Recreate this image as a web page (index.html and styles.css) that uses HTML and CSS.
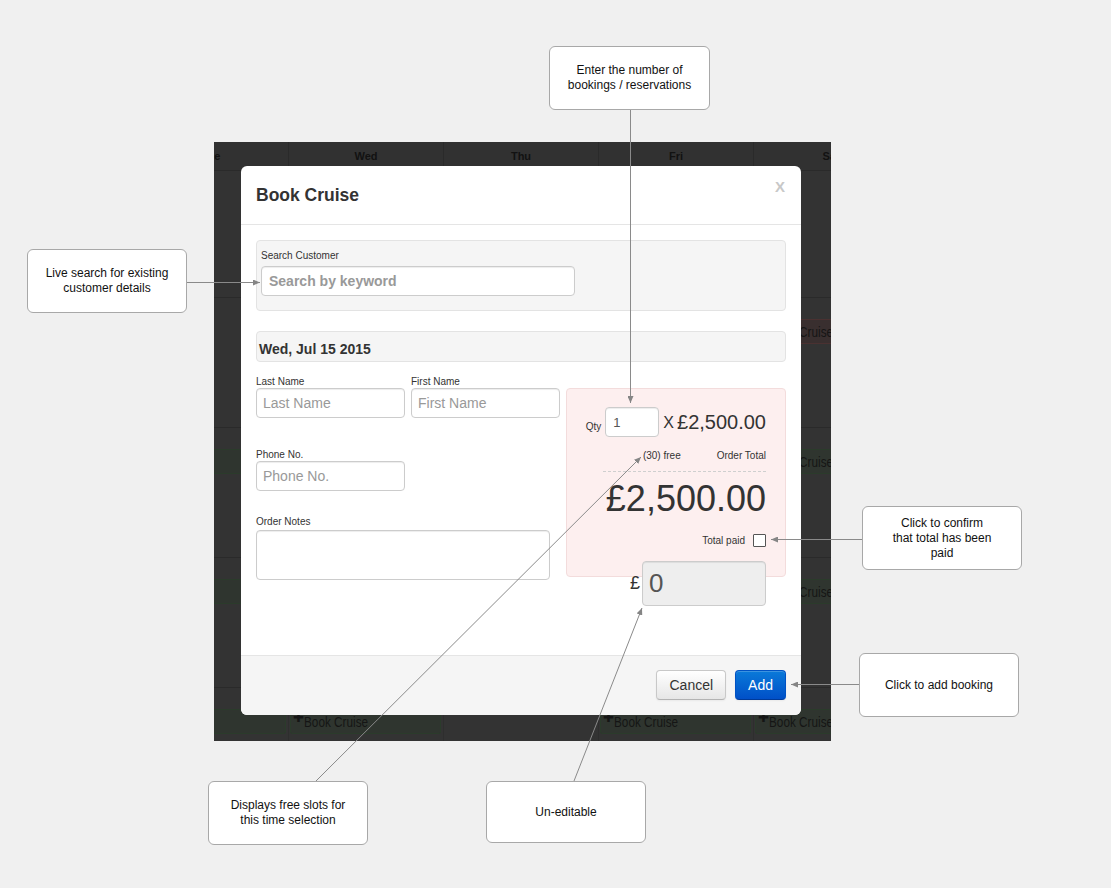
FILE: index.html
```html
<!DOCTYPE html>
<html lang="en">
<head>
<meta charset="utf-8">
<title>Book Cruise – booking dialog</title>
<link rel="stylesheet" href="styles.css">
</head>
<body>
<div class="stage">

  <!-- week calendar behind the dialog backdrop -->
  <div class="calendar">
    <div class="cal-grid">
      <div class="cal-head">Tue</div>
      <div class="cal-head">Wed</div>
      <div class="cal-head">Thu</div>
      <div class="cal-head">Fri</div>
      <div class="cal-head">Sat</div>

      <div class="cal-cell"></div>
      <div class="cal-cell"><div class="slot"><span class="plus">✚</span><span class="txt">Book Cruise</span></div></div>
      <div class="cal-cell"></div>
      <div class="cal-cell"><div class="slot"><span class="plus">✚</span><span class="txt">Book Cruise</span></div></div>
      <div class="cal-cell"></div>

      <div class="cal-cell"></div>
      <div class="cal-cell"><div class="slot"><span class="plus">✚</span><span class="txt">Book Cruise</span></div></div>
      <div class="cal-cell"></div>
      <div class="cal-cell"></div>
      <div class="cal-cell"><div class="slot full"><span class="plus">✚</span><span class="txt">Book Cruise</span></div></div>

      <div class="cal-cell"><div class="slot"><span class="plus">✚</span><span class="txt">Book Cruise</span></div></div>
      <div class="cal-cell"></div>
      <div class="cal-cell"></div>
      <div class="cal-cell"><div class="slot"><span class="plus">✚</span><span class="txt">Book Cruise</span></div></div>
      <div class="cal-cell"><div class="slot"><span class="plus">✚</span><span class="txt">Book Cruise</span></div></div>

      <div class="cal-cell"><div class="slot"><span class="plus">✚</span><span class="txt">Book Cruise</span></div></div>
      <div class="cal-cell"><div class="slot"><span class="plus">✚</span><span class="txt">Book Cruise</span></div></div>
      <div class="cal-cell"></div>
      <div class="cal-cell"></div>
      <div class="cal-cell"><div class="slot"><span class="plus">✚</span><span class="txt">Book Cruise</span></div></div>

      <div class="cal-cell"><div class="slot"><span class="plus">✚</span><span class="txt">Book Cruise</span></div></div>
      <div class="cal-cell"><div class="slot"><span class="plus">✚</span><span class="txt">Book Cruise</span></div></div>
      <div class="cal-cell"></div>
      <div class="cal-cell"><div class="slot"><span class="plus">✚</span><span class="txt">Book Cruise</span></div></div>
      <div class="cal-cell"><div class="slot"><span class="plus">✚</span><span class="txt">Book Cruise</span></div></div>
    </div>
  </div>

  <!-- booking dialog -->
  <div class="modal">
    <div class="modal-header">
      <h3>Book Cruise</h3>
      <span class="close">X</span>
    </div>

    <div class="modal-body">
      <div class="well search">
        <label class="lbl">Search Customer</label>
        <input class="input search-input" type="text" placeholder="Search by keyword">
      </div>

      <div class="well date">Wed, Jul 15 2015</div>

      <div class="form-grid">
        <div class="details">
          <div class="field-row">
            <div class="field">
              <label class="lbl">Last Name</label>
              <input class="input" type="text" placeholder="Last Name">
            </div>
            <div class="field">
              <label class="lbl">First Name</label>
              <input class="input" type="text" placeholder="First Name">
            </div>
          </div>
          <div class="field-row phone-row">
            <div class="field">
              <label class="lbl">Phone No.</label>
              <input class="input" type="text" placeholder="Phone No.">
            </div>
          </div>
          <div class="field-row notes-row">
            <div class="field notes">
              <label class="lbl">Order Notes</label>
              <textarea class="input notes-input"></textarea>
            </div>
          </div>
        </div>

        <div class="order">
          <div class="qty-row">
            <span class="qty-label">Qty</span>
            <input class="input qty-input" type="text" value="1">
            <span class="times">X</span>
            <span class="unit-price">£2,500.00</span>
          </div>
          <div class="meta-row">
            <span>(30) free</span>
            <span>Order Total</span>
          </div>
          <div class="rule"></div>
          <div class="total">£2,500.00</div>
          <div class="paid-row">
            <span>Total paid</span>
            <input class="paid-check" type="checkbox">
          </div>
          <div class="cash-row">
            <span class="currency">£</span>
            <input class="input cash-input" type="text" value="0" disabled>
          </div>
        </div>
      </div>
    </div>

    <div class="modal-footer">
      <button class="btn">Cancel</button>
      <button class="btn btn-primary">Add</button>
    </div>
  </div>

  <!-- annotation notes -->
  <div class="note note-qty">Enter the number of<br>bookings / reservations</div>
  <div class="note note-search">Live search for existing<br>customer details</div>
  <div class="note note-paid">Click to confirm<br>that total has been<br>paid</div>
  <div class="note note-add">Click to add booking</div>
  <div class="note note-free">Displays free slots for<br>this time selection</div>
  <div class="note note-cash">Un-editable</div>

  <!-- leader lines from notes to the controls -->
  <svg class="leaders" width="1111" height="888" viewBox="0 0 1111 888">
    <defs>
      <marker id="tip" markerWidth="7" markerHeight="6" refX="7" refY="3" orient="auto" markerUnits="userSpaceOnUse">
        <path d="M0,0 L7,3 L0,6 z" fill="#858585"/>
      </marker>
    </defs>
    <g stroke="#8a8a8a" stroke-width="1" fill="none">
      <line x1="630.5" y1="110" x2="630.5" y2="403" marker-end="url(#tip)"/>
      <line x1="187" y1="282.5" x2="260" y2="282.5" marker-end="url(#tip)"/>
      <line x1="862" y1="539.5" x2="771" y2="539.5" marker-end="url(#tip)"/>
      <line x1="859" y1="684.5" x2="791" y2="684.5" marker-end="url(#tip)"/>
      <line x1="316" y1="781" x2="641" y2="457" marker-end="url(#tip)"/>
      <line x1="574" y1="781" x2="642" y2="608" marker-end="url(#tip)"/>
    </g>
  </svg>
</div>
</body>
</html>
```

FILE: styles.css
```css
* {
  box-sizing: border-box;
}

html,
body {
  margin: 0;
}

body {
  background: #f0f0f0;
  font-family: "Liberation Sans", Arial, sans-serif;
  color: #333;
}

.stage {
  position: relative;
  width: 1111px;
  height: 888px;
  overflow: hidden;
}

/* ---------- calendar under the backdrop ---------- */
.calendar {
  position: absolute;
  left: 214px;
  top: 142px;
  width: 617px;
  height: 599px;
  overflow: hidden;
  background: #333;
}

.cal-grid {
  display: grid;
  grid-template-columns: repeat(5, 155px);
  grid-template-rows: 28px 127px repeat(4, 130px);
  width: 775px;
  margin-left: -81px;
}

.cal-head {
  display: flex;
  align-items: center;
  justify-content: center;
  border-left: 1px solid #2a2a2a;
  background: #313131;
  font-size: 11px;
  font-weight: bold;
  color: #121212;
}

.cal-cell {
  border-left: 1px solid #2e2e2e;
  border-top: 1px solid #2a2a2a;
  padding-top: 21px;
  min-width: 0;
}

.slot {
  display: flex;
  align-items: center;
  height: 25px;
  margin: 0 2px 0 1px;
  padding-left: 2px;
  background: #2f352f;
  border: 1px solid #2b3b2b;
  border-radius: 2px;
  color: #151515;
  white-space: nowrap;
  overflow: hidden;
}

.slot.full {
  background: #392f2f;
  border-color: #4a3131;
}

.slot .plus {
  align-self: flex-start;
  margin-top: 1px;
  font-family: "DejaVu Sans", sans-serif;
  font-size: 13px;
  line-height: 13px;
}

.slot .txt {
  display: inline-block;
  font-size: 14px;
  transform: scaleX(0.84);
  transform-origin: left center;
}

/* ---------- dialog ---------- */
.modal {
  position: absolute;
  left: 241px;
  top: 166px;
  width: 560px;
  height: 549px;
  display: flex;
  flex-direction: column;
  background: #fff;
  border-radius: 6px;
  overflow: hidden;
}

.modal-header {
  display: flex;
  justify-content: space-between;
  align-items: center;
  height: 59px;
  padding: 0 16px 0 15px;
  border-bottom: 1px solid #e5e5e5;
}

.modal-header h3 {
  margin: 0;
  font-size: 17.5px;
  font-weight: bold;
  color: #333;
}

.close {
  align-self: flex-start;
  margin-top: 12px;
  font-size: 15px;
  font-weight: bold;
  line-height: 17px;
  color: #c8c8c8;
}

.modal-body {
  flex: 1;
  padding: 15px;
}

.well {
  background: #f5f5f5;
  border: 1px solid #e3e3e3;
  border-radius: 4px;
}

.lbl {
  display: block;
  font-size: 10px;
  line-height: 13px;
  color: #333;
}

.input {
  display: block;
  width: 100%;
  height: 30px;
  margin: 0;
  padding: 0 6px;
  border: 1px solid #ccc;
  border-radius: 4px;
  background: #fff;
  box-shadow: inset 0 1px 1px rgba(0, 0, 0, 0.075);
  font-family: "Liberation Sans", Arial, sans-serif;
  font-size: 14px;
  color: #555;
  outline: none;
}

.input::placeholder {
  color: #999;
}

.search {
  height: 71px;
  padding: 8px 4px 0;
}

.search .lbl {
  margin-bottom: 4px;
}

.search-input {
  width: 314px;
  padding-left: 7px;
  font-weight: bold;
}

.date {
  display: flex;
  align-items: center;
  height: 31px;
  margin-top: 20px;
  padding: 4px 0 0 2px;
  font-size: 14px;
  font-weight: bold;
  color: #333;
}

.form-grid {
  display: flex;
  align-items: flex-start;
  gap: 6px;
  margin-top: 13px;
}

.details {
  width: 304px;
}

.field-row {
  display: flex;
  gap: 6px;
}

.field {
  width: 149px;
}

.phone-row {
  margin-top: 30px;
}

.notes-row {
  margin-top: 24px;
}

.field.notes {
  width: 294px;
}

.notes .lbl {
  margin-bottom: 2px;
}

.notes-input {
  height: 50px;
  resize: none;
}

/* order summary */
.order {
  width: 220px;
  height: 189px;
  margin-top: 13px;
  padding: 18px 19px 0;
  background: #fdefef;
  border: 1px solid #f3dcdc;
  border-radius: 4px;
}

.qty-row {
  display: flex;
  justify-content: flex-end;
  align-items: center;
}

.qty-label {
  margin: 9px 4px 0 0;
  font-size: 10px;
}

.qty-input {
  width: 54px;
  padding-left: 7px;
  font-size: 13px;
}

.times {
  margin: 1px 3px 0 4px;
  font-size: 16px;
}

.unit-price {
  font-size: 20px;
}

.meta-row {
  display: flex;
  justify-content: flex-end;
  gap: 36px;
  margin-top: 12px;
  font-size: 10px;
  line-height: 13px;
}

.rule {
  margin: 9px 0 0 17px;
  border-top: 1px dashed #cfcfcf;
}

.total {
  margin-top: 9px;
  text-align: right;
  font-size: 36px;
  line-height: 36px;
  color: #333;
}

.paid-row {
  display: flex;
  justify-content: flex-end;
  align-items: center;
  gap: 8px;
  margin-top: 17px;
  font-size: 10px;
}

.paid-check {
  appearance: none;
  width: 13px;
  height: 13px;
  margin: 0;
  background: #fff;
  border: 1px solid #555;
  border-radius: 1px;
}

.cash-row {
  display: flex;
  justify-content: flex-end;
  align-items: center;
  gap: 2px;
  margin-top: 14px;
}

.currency {
  font-size: 18px;
  color: #333;
}

.cash-input {
  width: 124px;
  height: 45px;
  padding-left: 6px;
  background: #eee;
  font-size: 26px;
  color: #555;
  opacity: 1;
}

/* footer */
.modal-footer {
  display: flex;
  justify-content: flex-end;
  align-items: flex-start;
  gap: 9px;
  height: 60px;
  padding: 14px 15px 0;
  background: #f5f5f5;
  border-top: 1px solid #e5e5e5;
}

.btn {
  height: 30px;
  padding: 0 12px;
  border: 1px solid #c8c8c8;
  border-bottom-color: #b3b3b3;
  border-radius: 4px;
  background: linear-gradient(#ffffff, #e6e6e6);
  box-shadow: inset 0 1px 0 rgba(255, 255, 255, 0.2), 0 1px 2px rgba(0, 0, 0, 0.05);
  font-family: "Liberation Sans", Arial, sans-serif;
  font-size: 14px;
  color: #333;
}

.btn-primary {
  border-color: #0052c4 #0052c4 #003a99;
  background: linear-gradient(#0a7ad9, #0050c8);
  color: #fff;
}

/* ---------- annotation notes ---------- */
.note {
  position: absolute;
  display: flex;
  align-items: center;
  justify-content: center;
  width: 160px;
  height: 64px;
  padding: 0 8px;
  background: #fff;
  border: 1px solid #a8a8a8;
  border-radius: 6px;
  text-align: center;
  font-size: 12px;
  line-height: 15px;
  color: #111;
}

.note-qty {
  left: 549px;
  top: 46px;
  width: 161px;
}

.note-search {
  left: 27px;
  top: 249px;
}

.note-paid {
  left: 862px;
  top: 506px;
}

.note-add {
  left: 859px;
  top: 653px;
}

.note-free {
  left: 208px;
  top: 781px;
}

.note-cash {
  left: 486px;
  top: 781px;
  height: 62px;
}

.leaders {
  position: absolute;
  left: 0;
  top: 0;
  pointer-events: none;
}
```
